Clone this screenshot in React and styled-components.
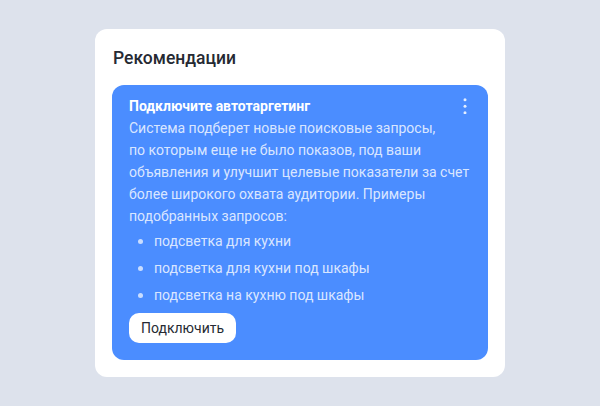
import React from "react";
import styled, { createGlobalStyle } from "styled-components";

const GlobalStyle = createGlobalStyle`
  html, body {
    margin: 0;
    padding: 0;
    background: #dde2ec;
  }
  body {
    font-family: Roboto, "Noto Sans", sans-serif;
  }
`;

const Page = styled.div`
  width: 600px;
  height: 406px;
  display: flex;
  justify-content: center;
  align-items: flex-start;
  padding-top: 29px;
  box-sizing: border-box;
`;

const Card = styled.section`
  width: 410px;
  box-sizing: border-box;
  background: #fff;
  border-radius: 12px;
  padding: 17px;
  display: flex;
  flex-direction: column;
`;

const Heading = styled.h2`
  margin: 0 0 0 1px;
  font-size: 17.5px;
  line-height: 24px;
  font-weight: 500;
  color: #262a33;
`;

const Promo = styled.div`
  margin-top: 15px;
  background: #4b8dff;
  border-radius: 12px;
  padding: 12px 17px 17px 17px;
  display: flex;
  flex-direction: column;
  align-items: flex-start;
`;

const PromoHead = styled.div`
  align-self: stretch;
  display: flex;
  justify-content: space-between;
  align-items: flex-start;
`;

const PromoTitle = styled.h3`
  margin: 0;
  font-size: 14px;
  line-height: 18px;
  font-weight: 700;
  color: #fff;
`;

const MenuButton = styled.button`
  border: none;
  background: none;
  padding: 0;
  margin: 1px 0 0 0;
  width: 12px;
  height: 16px;
  display: flex;
  justify-content: center;
  cursor: pointer;
`;

const Text = styled.p`
  margin: 2px 0 0;
  font-size: 14px;
  line-height: 22px;
  color: rgba(255, 255, 255, 0.8);
`;

const Line = styled.span`
  display: block;
  white-space: nowrap;
`;

const Examples = styled.ul`
  margin: 3px 0 0;
  padding: 0 0 0 9px;
  list-style: none;
  display: flex;
  flex-direction: column;
  gap: 5px;
`;

const Example = styled.li`
  display: flex;
  align-items: center;
  gap: 11px;
  font-size: 14px;
  line-height: 22px;
  color: rgba(255, 255, 255, 0.8);

  &::before {
    content: "";
    width: 5px;
    height: 5px;
    border-radius: 50%;
    background: rgba(255, 255, 255, 0.7);
  }
`;

const Connect = styled.button`
  margin-top: 7px;
  height: 30px;
  padding: 0 12px;
  border: none;
  border-radius: 10px;
  background: #fff;
  color: #262a33;
  font-family: inherit;
  font-size: 14px;
  cursor: pointer;
`;

const DotsIcon = () => (
  <svg width="4" height="16" viewBox="0 0 4 16" fill="rgba(255,255,255,0.85)">
    <circle cx="2" cy="1.8" r="1.5" />
    <circle cx="2" cy="8.3" r="1.5" />
    <circle cx="2" cy="14.8" r="1.5" />
  </svg>
);

const description = [
  "Система подберет новые поисковые запросы,",
  "по которым еще не было показов, под ваши",
  "объявления и улучшит целевые показатели за счет",
  "более широкого охвата аудитории. Примеры",
  "подобранных запросов:"
];

const queries = [
  "подсветка для кухни",
  "подсветка для кухни под шкафы",
  "подсветка на кухню под шкафы"
];

const App = () => (
  <>
    <GlobalStyle />
    <Page>
      <Card>
        <Heading>Рекомендации</Heading>
        <Promo>
          <PromoHead>
            <PromoTitle>Подключите автотаргетинг</PromoTitle>
            <MenuButton aria-label="Меню">
              <DotsIcon />
            </MenuButton>
          </PromoHead>
          <Text>
            {description.map((line) => (
              <Line key={line}>{line}</Line>
            ))}
          </Text>
          <Examples>
            {queries.map((q) => (
              <Example key={q}>{q}</Example>
            ))}
          </Examples>
          <Connect>Подключить</Connect>
        </Promo>
      </Card>
    </Page>
  </>
);

export default App;
